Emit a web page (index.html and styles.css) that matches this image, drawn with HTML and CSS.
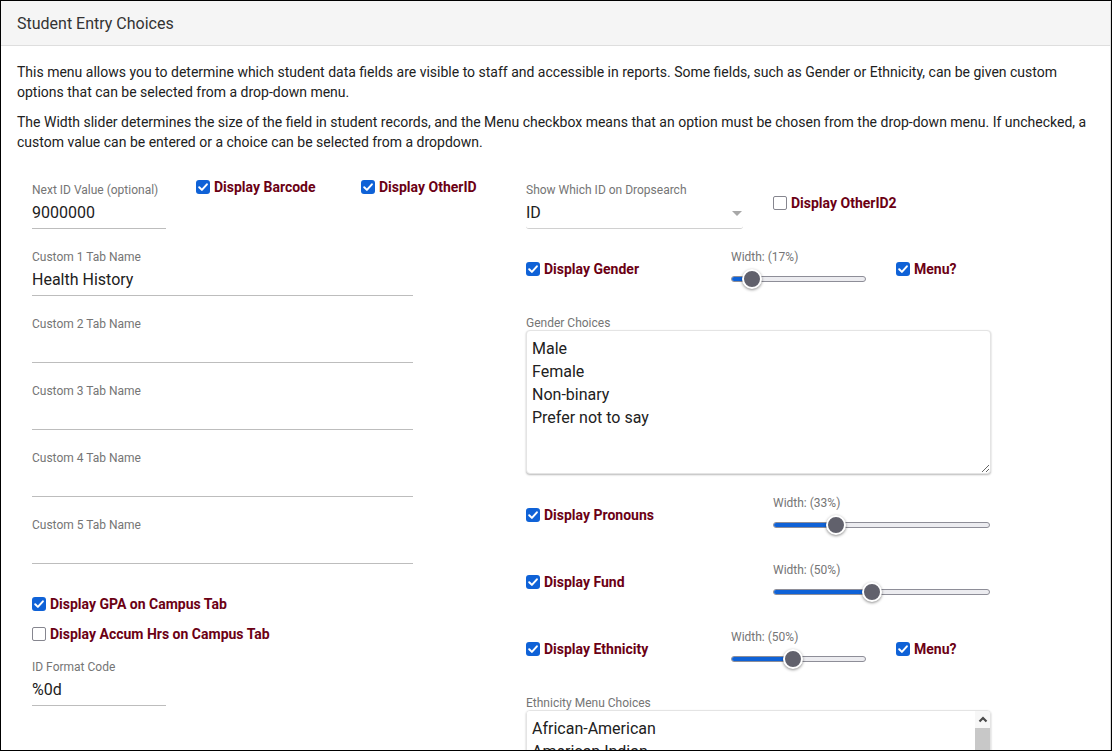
FILE: index.html
```html
<!DOCTYPE html>
<html lang="en">
<head>
<meta charset="utf-8">
<title>Student Entry Choices</title>
<link rel="stylesheet" href="styles.css">
</head>
<body>
<div class="frame">
  <div class="panel">
    <div class="head">Student Entry Choices</div>
    <div class="content">
      <p class="intro">This menu allows you to determine which student data fields are visible to staff and accessible in reports. Some fields, such as Gender or Ethnicity, can be given custom options that can be selected from a drop-down menu.</p>
      <p class="intro">The Width slider determines the size of the field in student records, and the Menu checkbox means that an option must be chosen from the drop-down menu. If unchecked, a custom value can be entered or a choice can be selected from a dropdown.</p>

      <div class="form">
        <div class="col col-left">
          <div class="row-top">
            <div class="field w-short">
              <div class="flabel">Next ID Value (optional)</div>
              <div class="finput">9000000</div>
            </div>
            <label class="chk up"><span class="box on"><svg viewBox="0 0 14 14" width="14" height="14"><path d="M3.2 7.2 L5.9 9.9 L10.9 4.3" fill="none" stroke="#fff" stroke-width="2" stroke-linecap="round" stroke-linejoin="round"/></svg></span>Display Barcode</label>
            <label class="chk up"><span class="box on"><svg viewBox="0 0 14 14" width="14" height="14"><path d="M3.2 7.2 L5.9 9.9 L10.9 4.3" fill="none" stroke="#fff" stroke-width="2" stroke-linecap="round" stroke-linejoin="round"/></svg></span>Display OtherID</label>
          </div>
          <div class="field w-long gap">
            <div class="flabel">Custom 1 Tab Name</div>
            <div class="finput">Health History</div>
          </div>
          <div class="field w-long gap">
            <div class="flabel">Custom 2 Tab Name</div>
            <div class="finput"></div>
          </div>
          <div class="field w-long gap">
            <div class="flabel">Custom 3 Tab Name</div>
            <div class="finput"></div>
          </div>
          <div class="field w-long gap">
            <div class="flabel">Custom 4 Tab Name</div>
            <div class="finput"></div>
          </div>
          <div class="field w-long gap">
            <div class="flabel">Custom 5 Tab Name</div>
            <div class="finput"></div>
          </div>
          <div class="chk-list">
            <label class="chk row30"><span class="box on"><svg viewBox="0 0 14 14" width="14" height="14"><path d="M3.2 7.2 L5.9 9.9 L10.9 4.3" fill="none" stroke="#fff" stroke-width="2" stroke-linecap="round" stroke-linejoin="round"/></svg></span>Display GPA on Campus Tab</label>
            <label class="chk row30"><span class="box off"></span>Display Accum Hrs on Campus Tab</label>
          </div>
          <div class="field w-short gap-s">
            <div class="flabel">ID Format Code</div>
            <div class="finput">%0d</div>
          </div>
        </div>

        <div class="col col-right">
          <div class="row-r1">
            <div class="field w-select">
              <div class="flabel">Show Which ID on Dropsearch</div>
              <div class="finput select"><span>ID</span><span class="caret"></span></div>
            </div>
            <label class="chk otherid2"><span class="box off"></span>Display OtherID2</label>
          </div>

          <div class="srow gap">
            <label class="chk c-narrow"><span class="box on"><svg viewBox="0 0 14 14" width="14" height="14"><path d="M3.2 7.2 L5.9 9.9 L10.9 4.3" fill="none" stroke="#fff" stroke-width="2" stroke-linecap="round" stroke-linejoin="round"/></svg></span>Display Gender</label>
            <div class="slider s-short">
              <div class="slabel">Width: (17%)</div>
              <div class="track-wrap">
                <div class="track"><div class="fill" style="width:21px"></div></div>
                <div class="thumb" style="left:21px"></div>
              </div>
            </div>
            <label class="chk menu"><span class="box on"><svg viewBox="0 0 14 14" width="14" height="14"><path d="M3.2 7.2 L5.9 9.9 L10.9 4.3" fill="none" stroke="#fff" stroke-width="2" stroke-linecap="round" stroke-linejoin="round"/></svg></span>Menu?</label>
          </div>

          <div class="tfield gap-l">
            <div class="tlabel">Gender Choices</div>
            <textarea class="tarea" spellcheck="false">Male
Female
Non-binary
Prefer not to say</textarea>
          </div>

          <div class="srow gap-m">
            <label class="chk c-wide"><span class="box on"><svg viewBox="0 0 14 14" width="14" height="14"><path d="M3.2 7.2 L5.9 9.9 L10.9 4.3" fill="none" stroke="#fff" stroke-width="2" stroke-linecap="round" stroke-linejoin="round"/></svg></span>Display Pronouns</label>
            <div class="slider s-long">
              <div class="slabel">Width: (33%)</div>
              <div class="track-wrap">
                <div class="track"><div class="fill" style="width:63px"></div></div>
                <div class="thumb" style="left:63px"></div>
              </div>
            </div>
          </div>

          <div class="srow gap-l">
            <label class="chk c-wide"><span class="box on"><svg viewBox="0 0 14 14" width="14" height="14"><path d="M3.2 7.2 L5.9 9.9 L10.9 4.3" fill="none" stroke="#fff" stroke-width="2" stroke-linecap="round" stroke-linejoin="round"/></svg></span>Display Fund</label>
            <div class="slider s-long">
              <div class="slabel">Width: (50%)</div>
              <div class="track-wrap">
                <div class="track"><div class="fill" style="width:99px"></div></div>
                <div class="thumb" style="left:99px"></div>
              </div>
            </div>
          </div>

          <div class="srow gap-l">
            <label class="chk c-narrow"><span class="box on"><svg viewBox="0 0 14 14" width="14" height="14"><path d="M3.2 7.2 L5.9 9.9 L10.9 4.3" fill="none" stroke="#fff" stroke-width="2" stroke-linecap="round" stroke-linejoin="round"/></svg></span>Display Ethnicity</label>
            <div class="slider s-short">
              <div class="slabel">Width: (50%)</div>
              <div class="track-wrap">
                <div class="track"><div class="fill" style="width:62px"></div></div>
                <div class="thumb" style="left:62px"></div>
              </div>
            </div>
            <label class="chk menu"><span class="box on"><svg viewBox="0 0 14 14" width="14" height="14"><path d="M3.2 7.2 L5.9 9.9 L10.9 4.3" fill="none" stroke="#fff" stroke-width="2" stroke-linecap="round" stroke-linejoin="round"/></svg></span>Menu?</label>
          </div>

          <div class="tfield gap-l">
            <div class="tlabel">Ethnicity Menu Choices</div>
            <div class="tbox">
              <textarea class="tarea-inner" spellcheck="false">African-American
American Indian
Asian
Hispanic
Pacific Islander
White
Other</textarea>
              <div class="sbar">
                <div class="sbtn"><svg viewBox="0 0 10 7" width="10" height="7"><path d="M1.5 5.5 L5 2 L8.5 5.5" fill="none" stroke="#4a4a4a" stroke-width="2.2"/></svg></div>
                <div class="sthumb"></div>
              </div>
            </div>
          </div>
        </div>
      </div>
    </div>
  </div>
</div>
</body>
</html>
```
FILE: styles.css
```css
* { box-sizing: border-box; }
html, body { margin: 0; padding: 0; background: #fff; }
body {
  font-family: Roboto, "Liberation Sans", Arial, sans-serif;
  color: #212121;
}
.frame {
  width: 1112px;
  height: 751px;
  border: 1px solid #000;
  overflow: hidden;
  background: #fff;
}
.panel {
  height: 100%;
  border-right: 1px solid #dcdcdc;
  border-top-right-radius: 3px;
}
.head {
  height: 45px;
  background: #f5f5f5;
  border-bottom: 1px solid #dedede;
  padding-left: 16px;
  padding-top: 1px;
  font-size: 16px;
  line-height: 44px;
  color: #333;
}
.content {
  padding: 16px 16px 0 16px;
}
.intro {
  margin: 0 0 10px 0;
  font-size: 14px;
  line-height: 20px;
  color: #212121;
}
.form {
  display: flex;
  margin-top: 30px;
  padding-left: 15px;
}
.col-left { width: 494px; flex: none; }
.col-right { width: 470px; flex: none; }

/* fields */
.field { display: flex; flex-direction: column; }
.w-short { width: 134px; }
.w-long { width: 381px; }
.w-select { width: 217px; }
.flabel {
  font-size: 12px;
  line-height: 16px;
  height: 16px;
  color: #757575;
  white-space: nowrap;
}
.finput {
  height: 31px;
  font-size: 16px;
  line-height: 29px;
  padding-bottom: 1px;
  color: #212121;
  border-bottom: 1px solid #bdbdbd;
}
.finput.select {
  display: flex;
  justify-content: space-between;
  align-items: center;
  border-bottom-color: #d0d0d0;
  border-bottom-right-radius: 3px;
  border-bottom-left-radius: 3px;
}
.caret {
  width: 0; height: 0;
  border-left: 5px solid transparent;
  border-right: 5px solid transparent;
  border-top: 5px solid #a8a8a8;
  margin-right: 1px;
  margin-top: 1px;
}
.gap { margin-top: 20px; }
.gap-m { margin-top: 21px; }
.gap-l { margin-top: 27px; }
.gap-s { margin-top: 10px; }

/* checkboxes */
.chk {
  display: inline-flex;
  align-items: center;
  gap: 4px;
  font-size: 14px;
  line-height: 16px;
  font-weight: 700;
  color: #6b0014;
  white-space: nowrap;
  cursor: pointer;
}
.box {
  width: 14px;
  height: 14px;
  border-radius: 3px;
  flex: none;
  display: flex;
}
.box.on { background: #0f62d7; }
.box.off { border: 1.6px solid #86868f; background: #fff; border-radius: 2px; }
.up { margin-top: -3px; }
.row-top {
  display: grid;
  grid-template-columns: 164px 165px auto;
  align-items: start;
}
.chk-list { margin-top: 25px; display: flex; flex-direction: column; }
.row30 { height: 30px; }

/* right column */
.row-r1 {
  display: flex;
  align-items: flex-start;
}
.otherid2 { margin-left: 30px; margin-top: 13px; }
.srow {
  display: flex;
  align-items: center;
}
.c-narrow { width: 205px; flex: none; }
.c-wide { width: 247px; flex: none; }
.menu { margin-left: 30px; }
.slider { display: flex; flex-direction: column; gap: 4px; }
.s-short { width: 135px; }
.s-long { width: 217px; }
.slabel {
  font-size: 12px;
  line-height: 16px;
  color: #757575;
}
.track-wrap {
  position: relative;
  height: 20px;
  display: flex;
  align-items: center;
}
.track {
  width: 100%;
  height: 6px;
  border-radius: 3px;
  background: #ececf0;
  border: 1px solid #8e8e98;
  overflow: hidden;
  display: flex;
}
.fill {
  background: #0f62d7;
  margin: -1px 0 0 -1px;
  height: 6px;
}
.thumb {
  position: absolute;
  top: 0;
  width: 20px;
  height: 20px;
  margin-left: -10px;
  border-radius: 50%;
  background: #61616c;
  border: 2px solid #fff;
  box-shadow: 0 1px 3px rgba(0,0,0,.45);
}

/* textareas */
.tfield { display: flex; flex-direction: column; width: 465px; }
.tlabel {
  font-size: 12px;
  line-height: 14px;
  height: 14px;
  color: #757575;
}
.tarea {
  width: 465px;
  height: 144px;
  font-family: Roboto, "Liberation Sans", Arial, sans-serif;
  font-size: 16px;
  line-height: 23px;
  color: #212121;
  padding: 6px 5px 4px 5px;
  border: 1px solid #e4e4e4;
  border-radius: 4px;
  box-shadow: 0 1px 2px rgba(0,0,0,.28);
  outline: none;
  resize: both;
  overflow: hidden;
}
.tbox {
  display: flex;
  width: 465px;
  height: 144px;
  border: 1px solid #e4e4e4;
  border-radius: 4px;
  box-shadow: 0 1px 2px rgba(0,0,0,.28);
  overflow: hidden;
}
.tarea-inner {
  flex: 1;
  border: none;
  outline: none;
  resize: none;
  overflow: hidden;
  font-family: Roboto, "Liberation Sans", Arial, sans-serif;
  font-size: 16px;
  line-height: 23px;
  color: #212121;
  padding: 6px 5px 4px 5px;
  background: #fff;
}
.sbar {
  width: 15px;
  flex: none;
  display: flex;
  flex-direction: column;
  background: #f1f1f1;
}
.sbtn {
  height: 17px;
  background: #f7f7f7;
  display: flex;
  align-items: center;
  justify-content: center;
}
.sthumb {
  flex: 1;
  background: #c8c8c8;
}
```
